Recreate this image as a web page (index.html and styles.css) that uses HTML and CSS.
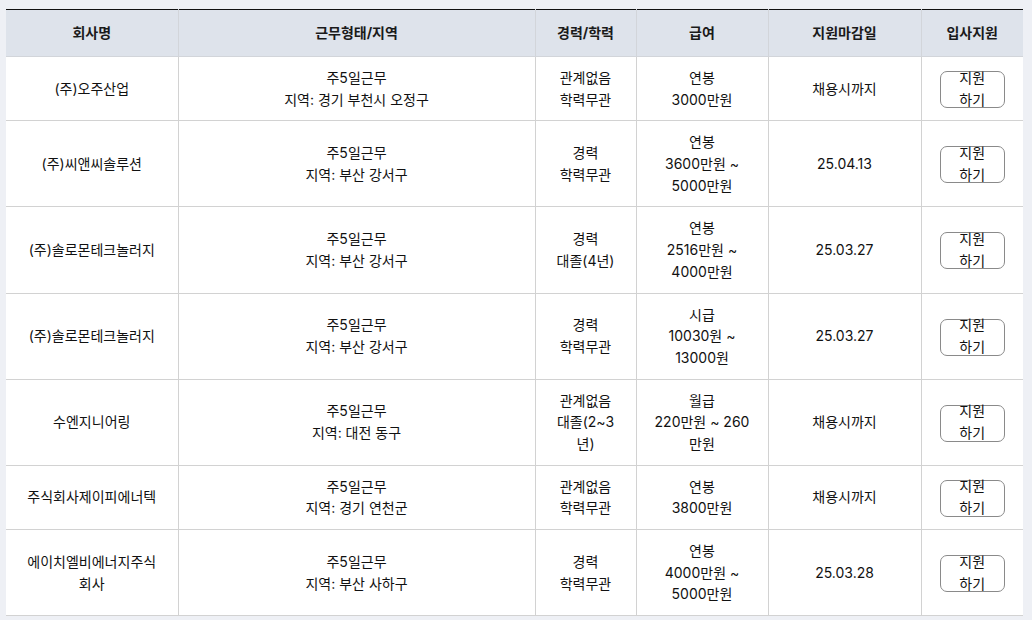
FILE: index.html
```html
<!DOCTYPE html>
<html lang="ko">
<head>
<meta charset="utf-8">
<link rel="stylesheet" href="styles.css">
</head>
<body>
<div class="wrap">
<table class="jobs">
<colgroup>
<col class="c-name"><col class="c-type"><col class="c-exp"><col class="c-pay"><col class="c-due"><col class="c-apply">
</colgroup>
<thead>
<tr><th>회사명</th><th>근무형태/지역</th><th>경력/학력</th><th>급여</th><th>지원마감일</th><th>입사지원</th></tr>
</thead>
<tbody>
<tr>
<td>(주)오주산업</td>
<td>주5일근무<br>지역: 경기 부천시 오정구</td>
<td>관계없음<br>학력무관</td>
<td>연봉<br>3000만원</td>
<td>채용시까지</td>
<td><button class="apply"><span class="apply-label">지원 하기</span></button></td>
</tr>
<tr>
<td>(주)씨앤씨솔루션</td>
<td>주5일근무<br>지역: 부산 강서구</td>
<td>경력<br>학력무관</td>
<td>연봉<br>3600만원 ~<br>5000만원</td>
<td>25.04.13</td>
<td><button class="apply"><span class="apply-label">지원 하기</span></button></td>
</tr>
<tr>
<td>(주)솔로몬테크놀러지</td>
<td>주5일근무<br>지역: 부산 강서구</td>
<td>경력<br>대졸(4년)</td>
<td>연봉<br>2516만원 ~<br>4000만원</td>
<td>25.03.27</td>
<td><button class="apply"><span class="apply-label">지원 하기</span></button></td>
</tr>
<tr>
<td>(주)솔로몬테크놀러지</td>
<td>주5일근무<br>지역: 부산 강서구</td>
<td>경력<br>학력무관</td>
<td>시급<br>10030원 ~<br>13000원</td>
<td>25.03.27</td>
<td><button class="apply"><span class="apply-label">지원 하기</span></button></td>
</tr>
<tr>
<td>수엔지니어링</td>
<td>주5일근무<br>지역: 대전 동구</td>
<td>관계없음<br>대졸(2~3<br>년)</td>
<td>월급<br>220만원 ~ 260<br>만원</td>
<td>채용시까지</td>
<td><button class="apply"><span class="apply-label">지원 하기</span></button></td>
</tr>
<tr>
<td>주식회사제이피에너텍</td>
<td>주5일근무<br>지역: 경기 연천군</td>
<td>관계없음<br>학력무관</td>
<td>연봉<br>3800만원</td>
<td>채용시까지</td>
<td><button class="apply"><span class="apply-label">지원 하기</span></button></td>
</tr>
<tr>
<td>에이치엘비에너지주식<br>회사</td>
<td>주5일근무<br>지역: 부산 사하구</td>
<td>경력<br>학력무관</td>
<td>연봉<br>4000만원 ~<br>5000만원</td>
<td>25.03.28</td>
<td><button class="apply"><span class="apply-label">지원 하기</span></button></td>
</tr>
</tbody>
</table>
</div>
</body>
</html>
```
FILE: styles.css
```css
html, body {
  margin: 0;
  padding: 0;
  background: #eef0f5;
  font-family: Inter, "Noto Sans CJK KR", sans-serif;
  color: #111;
}
.wrap {
  padding: 9px 9px 0 6px;
}
.jobs {
  width: 1017px;
  border-collapse: collapse;
  table-layout: fixed;
  background: #fff;
  border-top: 1px solid #111;
  font-size: 14px;
  line-height: 1.55;
}
.c-name { width: 172px; }
.c-type { width: 357px; }
.c-exp { width: 101px; }
.c-pay { width: 132px; }
.c-due { width: 153px; }
.c-apply { width: 102px; }
.jobs th {
  background: #dee3eb;
  height: 46px;
  padding: 0;
  font-weight: 700;
  color: #1a1a1a;
  border-left: 1px solid #d2d5da;
  border-bottom: 1px solid #d2d5da;
  text-align: center;
  vertical-align: middle;
}
.jobs td {
  padding: 10px 4px;
  border-left: 1px solid #d2d2d2;
  border-bottom: 1px solid #d2d2d2;
  text-align: center;
  vertical-align: middle;
}
.jobs th:first-child, .jobs td:first-child { border-left: none; }
.apply {
  display: flex;
  align-items: center;
  justify-content: center;
  margin: 2px auto 0;
  width: 65px;
  height: 37px;
  padding: 0 6px;
  background: #fff;
  border: 1px solid #8a8a8a;
  border-radius: 7px;
  font-family: inherit;
  font-size: 14px;
  line-height: 22px;
  color: #111;
  overflow: visible;
  cursor: pointer;
}
.apply-label {
  display: block;
  word-break: keep-all;
  margin-top: -2px;
}
```
